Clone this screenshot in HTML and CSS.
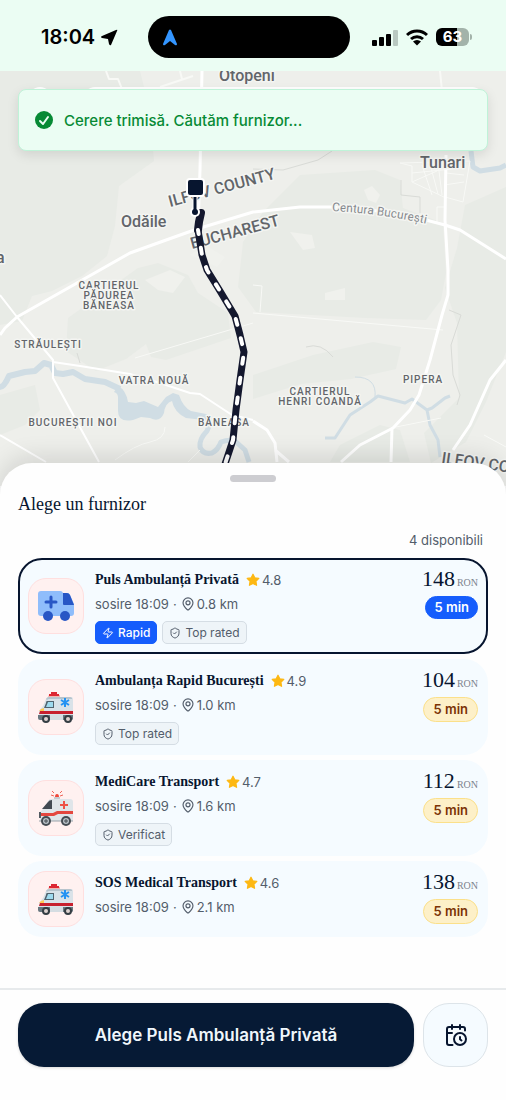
FILE: index.html
```html
<!DOCTYPE html>
<html lang="ro">

<head>
    <meta charset="UTF-8" />
    <meta name="viewport" content="width=device-width, initial-scale=1.0" />
    <link rel="stylesheet" href="styles.css">
    <title>Alege un furnizor</title>
</head>

<body>
    <!-- shared icons -->
    <svg class="sprite" aria-hidden="true">
        <symbol id="star" viewBox="0 0 24 24">
            <path d="M12 2l3.1 6.3 6.9 1-5 4.9 1.2 6.9L12 17.8l-6.2 3.3L7 14.2 2 9.3l6.9-1z" fill="#fdb813" stroke="#fdb813" stroke-width="2" stroke-linejoin="round" />
        </symbol>
        <symbol id="place" viewBox="0 0 24 24">
            <g fill="none" stroke="currentColor" stroke-width="2">
                <path d="M20.500 10c0 5-5.500 10.200-7.400 11.800a1.800 1.800 0 0 1-2.200 0C9 20.200 3.500 15 3.500 10a8.500 8.500 0 0 1 17 0z" />
                <circle cx="12" cy="10" r="3.500" />
            </g>
        </symbol>
        <symbol id="shield" viewBox="0 0 24 24">
            <path d="M20 13c0 5-3.500 7.500-7.700 9a1 1 0 0 1-.6 0C7.500 20.500 4 18 4 13V6a1 1 0 0 1 1-1c2 0 4.500-1.200 6.200-2.700a1.200 1.200 0 0 1 1.600 0C14.500 3.800 17 5 19 5a1 1 0 0 1 1 1zM9 12l2 2 4-4" fill="none" stroke="currentColor" stroke-width="2" stroke-linecap="round" stroke-linejoin="round" />
        </symbol>
        <symbol id="bolt" viewBox="0 0 24 24">
            <path d="M4 14a1 1 0 0 1-.8-1.600l9.900-10.200a.5.5 0 0 1 .9.500L12 8.700A1 1 0 0 0 13 10h7a1 1 0 0 1 .8 1.600l-9.900 10.200a.5.5 0 0 1-.9-.5L12 15.300A1 1 0 0 0 11 14z" fill="none" stroke="currentColor" stroke-width="2" stroke-linejoin="round" />
        </symbol>
        <symbol id="van-blue" viewBox="0 0 36 36">
            <path d="M3 3h19a3 3 0 0 1 3 3v22H3a3 3 0 0 1-3-3V6a3 3 0 0 1 3-3z" fill="#8fbdfb" />
            <path d="M24 5h5q2 0 3 2l4 9v9q0 3-3 3h-9z" fill="#8fbdfb" />
            <path d="M25 5h4q2 0 3 2l4 10H26q-1 0-1-1z" fill="#2856c5" />
            <path d="M13 9v10M8 14h10" stroke="#2856c5" stroke-width="3" stroke-linecap="round" />
            <circle cx="10" cy="28" r="5" fill="#2856c5" />
            <circle cx="27" cy="28" r="5" fill="#2856c5" />
        </symbol>
        <symbol id="van-red" viewBox="0 0 36 36">
            <path d="M10 8q0-2 2-2h10v3H10z" fill="#f3b5b0" />
            <path d="M13 3h6v3h-6zM11 5h10v2H11z" fill="#dc2732" />
            <path d="M10 8h23q2 0 2 2v20H1v-8l4-5 3-7q1-2 2-2z" fill="#d9e2e8" />
            <path d="M9 11q1-1 2-1h23v-1q-1-1-2-1H11q-2 0-3 2z" fill="#b7c4cd" />
            <path d="M9 12h7v7H6l2-5q0-2 1-2z" fill="#51636e" />
            <path d="M10 13h5v5H8z" fill="#9edaee" />
            <path d="M3 20l3-1v3H1z" fill="#ffca55" />
            <path d="M2 22h33v3H1z" fill="#c7202e" />
            <path d="M0 26h35v4q0 1-2 1H2q-2 0-2-2z" fill="#68777f" />
            <path d="M12 26h13v5H12z" fill="#d5dde2" />
            <path d="M27 9v9M23 11l8 5M31 11l-8 5" stroke="#2492f2" stroke-width="2" />
            <circle cx="8" cy="30" r="4" fill="#343d43" />
            <circle cx="30" cy="30" r="4" fill="#343d43" />
            <circle cx="8" cy="30" r="2" fill="#ddd2cf" />
            <circle cx="30" cy="30" r="2" fill="#ddd2cf" />
        </symbol>
        <symbol id="van-siren" viewBox="0 0 36 36">
            <path d="M17 7q0-3 2-3t2 3z" fill="#ef493b" />
            <path d="M13 5l3 1M14 1l2 2M25 5l-3 1M24 1l-2 2" stroke="#ef6358" stroke-width="1" />
            <path d="M16 7h6v3h-6z" fill="#c8ccd0" />
            <path d="M13 9h19q3 0 3 3v19H2v-9l3-3 5-8q1-2 3-2z" fill="#dfe5e9" />
            <path d="M14 10v9H4l6-7q1-2 4-2z" fill="#424a52" />
            <path d="M2 23h13l4-2h16v3H20l-4 2H2z" fill="#e4473f" />
            <path d="M26 11v8M22 15h8" stroke="#ed5147" stroke-width="2" />
            <path d="M2 22v6" stroke="#535b62" stroke-width="2" />
            <path d="M1 31h34" stroke="#9aa3a9" stroke-width="1" />
            <circle cx="8" cy="31" r="5" fill="#444c52" />
            <circle cx="28" cy="31" r="5" fill="#444c52" />
            <circle cx="8" cy="31" r="3" fill="#b9c2c8" />
            <circle cx="28" cy="31" r="3" fill="#b9c2c8" />
            <path d="M6 31h4M8 29v4M26 31h4M28 29v4" stroke="#444c52" stroke-width="1" />
        </symbol>
    </svg>

    <header class="status-bar">
        <div class="clock">
            <span>18:04</span>
            <svg width="17" height="17" viewBox="0 0 17 17"><path d="M15 1q2-1 1 1l-6 14q-1 1-2-1l-1-5-6-1q-2-1 0-2z" fill="#000" /></svg>
        </div>
        <div class="island">
            <svg width="16" height="17" viewBox="0 0 16 17"><path d="M7 1q1-1 2 0l6 14q0 2-2 1l-5-4-5 4q-2 1-2-1z" fill="#3395ff" /></svg>
        </div>
        <div class="signals">
            <svg width="26" height="17" viewBox="0 0 26 17">
                <rect x="0" y="11" width="5" height="6" rx="1" />
                <rect x="7" y="8" width="5" height="9" rx="1" />
                <rect x="14" y="5" width="5" height="12" rx="1" />
                <rect x="21" y="1" width="5" height="16" rx="1" fill="#b9c9c1" />
            </svg>
            <svg width="22" height="17" viewBox="0 0 22 17">
                <path d="M1 6a14.500 14.500 0 0 1 20 0M5 10a9 9 0 0 1 12 0" fill="none" stroke="#000" stroke-width="3" />
                <path d="M7 12.500a6 6 0 0 1 8 0L11 16.500z" />
            </svg>
            <div class="battery"><span>63</span></div>
        </div>
    </header>

    <section class="map">
        <svg class="map-canvas" viewBox="0 71 506 415" role="img" aria-label="Hartă">
            <rect y="71" width="506" height="415" fill="#eeefeb" />
            <!-- fields and woods -->
            <g fill="#e8ebe6">
                <path d="M0 71h140l10 40 4 50-35 25-4 40-8 30-25 20-30 15-20 5-10 25L0 325z" />
                <path d="M68 318l70-50 20-5 30 12 10 18 30 20 3 25-65 22-15-3-5-13-20 15-30 12-30-20z" />
                <path d="M300 175l75-5 25 10 3 28 40 15 3 50-5 27-15 20-60-2-110-6-18-25 5-45 20-30z" />
                <path d="M465 205l41-18v165l-20 50-20 40-35 21-7-30 35-35-2-75-12-35 12-40z" />
                <path d="M253 375l60-20 60-13 28 5-5 22-45 10-50 5-48 15z" />
                <path d="M340 445l40-20 20 5 10 32h-80z" />
                <path d="M0 395l35-10 5 25-15 15-25 10z" />
            </g>
            <g fill="#f0f1ed">
                <path d="M290 232l22 3 3 13-12 2zM325 293l20-5v12h-20zM145 280l25-10 15 7-12 16-15-3zM190 255l15-10 20 12-8 10zM364 190l8-4 8 9-4 8-8-3z" />
            </g>
            <!-- water -->
            <path d="M118 386q8 4 10 16l8 1 8-2 14 6 8-10 7-4 6 2q4 12 12 16l15 3-2 6-18-2q-12-6-14-17-7 2-8 12-4 10-14 5l-9-1-8 3q-15 3-15-9v-10q1-8-4-9z" fill="#d0dde4" />
            <g fill="none" stroke="#d0dde4" stroke-linejoin="round">
                <path d="M0 387q4 0 9-11l16-4 10-1 9-8 7 2 4 8 8 1 10-2 12 7 20 3 15 7" stroke-width="6" />
                <path d="M205 416q7 5 2 15-8 8-7 16 3 8 12 6 6-3 9-11 8-3 14-1l10 9 4 12" stroke-width="5" />
                <path d="M325 438h10l15-23 20-13 8-6 27 7 7-4 15 11 5-2 13-10 5-2M427 410l3 15 8 15 2 17" stroke-width="3" />
                <path d="M375 397q2-20-20-20" stroke-width="1" />
                <path d="M471 151l2 16 7 4 20-3 6-3" stroke-width="5" />
            </g>
            <!-- minor roads -->
            <g fill="none" stroke="#f8f9f6" stroke-width="2" stroke-linejoin="round">
                <path d="M106 71l3 8h9l4 10M180 71l2 8M160 87l33-11M440 71l3 30" />
                <path d="M400 163l12 3v16l34 16M400 163l70-2-7 41-18-5M412 173l50-5M412 182l25-11M422 165l10 30M430 164l8 30M438 163l4 32M446 173l18 2M444 185l20-3" stroke-width="1" />
                <path d="M445 207h-8v17M253 285l9 1-2 26M253 313l190 17M135 358l118-35" stroke-width="1" />
                <path d="M391 428l50-10M484 435l22 12M115 460q20-15 35-18t15-15M200 450l-12 12" stroke-width="1" />
            </g>
            <g fill="none" stroke="#d9dbd7" stroke-width="1">
                <path d="M253 169l30 1 35-10 14-9M401 180v15l19 2v16M306 347q15-5 27 10M449 310l12 5-10 30 2 30 7 20-3 10M77 353l3 10" />
            </g>
            <!-- main roads -->
            <g fill="none" stroke="#fff" stroke-width="3" stroke-linejoin="round">
                <path d="M0 335l5-7 12-11 113-64 25-9 42-15 56-17 47-5h30l60 5 32 7 23 6 15 5 46 29" />
                <path d="M202 71l-2 99-2 58" />
                <path d="M0 295l17 22 36 43v18l46 84M53 362l27 4 50 8 30 9 30 10 10 1 32 21 21 5M0 435l46 27" stroke-width="2" />
                <path d="M446 155l-1 65 3 50v25l-6 20-12 45-11 35-9 15-17 18-33 17-19 17M392 428l-1 34M506 360l-16 20-20 45-17 25" />
                <path d="M253 421l14 9 8 13 2 19M275 450l14 12" />
            </g>

            <g class="map-label town">
                <text x="219" y="81">Otopeni</text>
                <text x="121" y="227">Odăile</text>
                <text x="420" y="168">Tunari</text>
                <text x="-4" y="263">a</text>
                <text transform="translate(170 207) rotate(-15)">ILFOV COUNTY</text>
                <text transform="translate(192 249) rotate(-15)">BUCHAREST</text>
                <text transform="translate(441 463) rotate(8)">ILFOV COUNTY</text>
            </g>
            <g class="map-label district">
                <text x="109" y="289">CARTIERUL</text>
                <text x="109" y="299">PĂDUREA</text>
                <text x="109" y="309">BĂNEASA</text>
                <text x="48" y="348">STRĂULEȘTI</text>
                <text x="154" y="384">VATRA NOUĂ</text>
                <text x="73" y="426">BUCUREȘTII NOI</text>
                <text x="224" y="426">BĂNEASA</text>
                <text x="320" y="395">CARTIERUL</text>
                <text x="320" y="405">HENRI COANDĂ</text>
                <text x="423" y="383">PIPERA</text>
            </g>
            <path id="ring-road" d="M332 211q45 2 100 14" fill="none" />
            <text class="map-label road"><textPath href="#ring-road">Centura București</textPath></text>

            <!-- route -->
            <path d="M201 213l-2 9-1 8" fill="none" stroke="#14182e" stroke-width="8" stroke-linecap="round" />
            <path d="M198 230l4 25 5 15 13 21 15 25 5 19 4 17-4 28-4 30-3 30-10 30" fill="none" stroke="#14182e" stroke-width="7" stroke-linejoin="round" />
            <path d="M198 230l4 25 5 15 13 21 15 25 5 19 4 17-4 28-4 30-3 30-10 30" fill="none" stroke="#fff" stroke-width="4" stroke-linecap="round" stroke-dasharray="6 14" stroke-dashoffset="-18" />
            <path d="M195 195v16" stroke="#fff" stroke-width="5" />
            <circle cx="195" cy="212" r="5" fill="#fff" />
            <circle cx="195" cy="212" r="3" fill="#07152f" />
            <path d="M195 195v16" stroke="#07152f" stroke-width="3" />
            <rect x="187" y="179" width="17" height="17" rx="3" fill="#07152f" stroke="#fff" stroke-width="2" />
        </svg>
        <div class="map-overlay">
            <div class="search-row"><span class="search-back"></span><span class="search-field"></span></div>
            <div class="toast" role="status">
                <svg width="20" height="20" viewBox="0 0 20 20">
                    <circle cx="10" cy="10" r="9" fill="#078a35" />
                    <path d="M6 11l3 3 5-7" fill="none" stroke="#ebfdf3" stroke-width="2" stroke-linecap="round" stroke-linejoin="round" />
                </svg>
                <span>Cerere trimisă. Căutăm furnizor...</span>
            </div>
        </div>
    </section>

    <main class="sheet">
        <div class="handle"></div>
        <h1>Alege un furnizor</h1>
        <p class="count">4 disponibili</p>

        <ul class="providers">
            <li>
                <input type="radio" name="provider" id="puls" class="pick" checked>
                <label class="provider" for="puls">
                    <span class="thumb"><svg><use href="#van-blue" /></svg></span>
                    <span class="info">
                        <span class="name-row"><span class="name">Puls Ambulanță Privată</span><span class="rating"><svg><use href="#star" /></svg>4.8</span></span>
                        <span class="meta">sosire 18:09 <span class="dot">·</span> <svg><use href="#place" /></svg>0.8 km</span>
                        <span class="chips">
                            <span class="chip fast"><svg><use href="#bolt" /></svg>Rapid</span>
                            <span class="chip"><svg><use href="#shield" /></svg>Top rated</span>
                        </span>
                    </span>
                    <span class="cost"><span class="price">148<small>RON</small></span><span class="eta">5 min</span></span>
                </label>
            </li>
            <li>
                <input type="radio" name="provider" id="rapid" class="pick">
                <label class="provider" for="rapid">
                    <span class="thumb"><svg><use href="#van-red" /></svg></span>
                    <span class="info">
                        <span class="name-row"><span class="name">Ambulanța Rapid București</span><span class="rating"><svg><use href="#star" /></svg>4.9</span></span>
                        <span class="meta">sosire 18:09 <span class="dot">·</span> <svg><use href="#place" /></svg>1.0 km</span>
                        <span class="chips"><span class="chip"><svg><use href="#shield" /></svg>Top rated</span></span>
                    </span>
                    <span class="cost"><span class="price">104<small>RON</small></span><span class="eta">5 min</span></span>
                </label>
            </li>
            <li>
                <input type="radio" name="provider" id="medicare" class="pick">
                <label class="provider" for="medicare">
                    <span class="thumb"><svg><use href="#van-siren" /></svg></span>
                    <span class="info">
                        <span class="name-row"><span class="name">MediCare Transport</span><span class="rating"><svg><use href="#star" /></svg>4.7</span></span>
                        <span class="meta">sosire 18:09 <span class="dot">·</span> <svg><use href="#place" /></svg>1.6 km</span>
                        <span class="chips"><span class="chip"><svg><use href="#shield" /></svg>Verificat</span></span>
                    </span>
                    <span class="cost"><span class="price">112<small>RON</small></span><span class="eta">5 min</span></span>
                </label>
            </li>
            <li>
                <input type="radio" name="provider" id="sos" class="pick">
                <label class="provider" for="sos">
                    <span class="thumb"><svg><use href="#van-red" /></svg></span>
                    <span class="info">
                        <span class="name-row"><span class="name">SOS Medical Transport</span><span class="rating"><svg><use href="#star" /></svg>4.6</span></span>
                        <span class="meta">sosire 18:09 <span class="dot">·</span> <svg><use href="#place" /></svg>2.1 km</span>
                    </span>
                    <span class="cost"><span class="price">138<small>RON</small></span><span class="eta">5 min</span></span>
                </label>
            </li>
        </ul>
    </main>

    <footer class="actions">
        <button type="button" class="confirm">Alege Puls Ambulanță Privată</button>
        <button type="button" class="schedule" aria-label="Programează">
            <svg width="24" height="24" viewBox="0 0 24 24" fill="none" stroke="currentColor" stroke-width="2" stroke-linecap="round" stroke-linejoin="round">
                <path d="M21 7.500V6a2 2 0 0 0-2-2H5a2 2 0 0 0-2 2v14a2 2 0 0 0 2 2h3.500M16 2v4M8 2v4M3 10h5M17.500 17.500L16 16.300V14" />
                <circle cx="16" cy="16" r="6" />
            </svg>
        </button>
    </footer>
</body>

</html>
```
FILE: styles.css
```css
:root {
    --navy: #07152f;
    --blue: #155dfc;
    --muted: #535d6b;
    --mint: #ebfdf3;
    --card: #f5fbff;
    --line: #dde4e9;
}

* {
    box-sizing: border-box;
}

body {
    margin: 0;
    min-height: 100vh;
    display: flex;
    flex-direction: column;
    background: #fefefe;
    color: var(--navy);
    font-family: Inter, "Liberation Sans", sans-serif;
    font-size: 13px;
}

.sprite {
    position: absolute;
    width: 0;
    height: 0;
}

/* status bar */
.status-bar {
    display: grid;
    grid-template-columns: 1fr auto 1fr;
    align-items: center;
    padding: 16px 37px 13px 29px;
    background: var(--mint);
    color: #000;
}

.clock {
    display: flex;
    align-items: center;
    gap: 6px;
    padding-left: 12px;
    font-size: 20px;
    font-weight: 600;
}

.island {
    display: flex;
    align-items: center;
    width: 202px;
    height: 42px;
    padding-left: 14px;
    border-radius: 21px;
    background: #000;
}

.signals {
    display: flex;
    align-items: center;
    justify-content: flex-end;
    gap: 8px;
}

.battery {
    position: relative;
    width: 33px;
    height: 18px;
    border-radius: 6px;
    background: linear-gradient(90deg, #000 63%, #a3b3aa 63%);
    color: #fff;
    font-size: 15px;
    font-weight: 700;
    line-height: 18px;
    text-align: center;
}

.battery::after {
    content: "";
    position: absolute;
    top: 6px;
    left: 34px;
    width: 2px;
    height: 6px;
    border-radius: 0 2px 2px 0;
    background: #a3b3aa;
}

/* map */
.map {
    position: relative;
}

.map-canvas {
    display: block;
    width: 100%;
    height: auto;
}

.map-label {
    font-family: Roboto, "Liberation Sans", sans-serif;
    fill: #62656a;
    stroke: #f4f5f2;
    stroke-width: 3px;
    stroke-linejoin: round;
    paint-order: stroke;
}

.town {
    font-size: 16px;
    font-weight: 500;
}

.district {
    font-size: 10px;
    font-weight: 500;
    letter-spacing: 1px;
    text-anchor: middle;
}

.road {
    font-size: 12px;
    fill: #85888d;
}

.map-overlay {
    position: absolute;
    top: 16px;
    left: 18px;
    right: 18px;
}

.search-row {
    display: flex;
    justify-content: space-between;
    height: 2px;
    padding: 0 4px 0 10px;
}

.search-back,
.search-field {
    height: 24px;
    border-radius: 12px;
    background: #fff;
}

.search-back {
    width: 24px;
}

.search-field {
    width: 88%;
}

.toast {
    position: relative;
    display: flex;
    align-items: center;
    gap: 10px;
    height: 62px;
    padding: 0 15px;
    border: 1px solid #bff3d8;
    border-radius: 8px;
    background: var(--mint);
    box-shadow: 0 4px 12px rgba(0, 0, 0, 0.1);
    color: #078a35;
    font-size: 15px;
    font-weight: 500;
}

/* provider sheet */
.sheet {
    position: relative;
    flex: 1;
    margin-top: -23px;
    padding: 12px 18px 16px;
    border-radius: 32px 32px 0 0;
    background: #fefefe;
    box-shadow: 0 -6px 24px rgba(0, 0, 0, 0.12);
}

.handle {
    width: 46px;
    height: 7px;
    margin: 0 auto 9px;
    border-radius: 4px;
    background: #cdcdd1;
}

h1 {
    margin: 0 0 13px;
    font-family: "Liberation Serif", serif;
    font-size: 18px;
    font-weight: 400;
    line-height: 26px;
}

.count {
    margin: 0 5px 8px;
    color: var(--muted);
    line-height: 20px;
    text-align: right;
}

.providers {
    display: flex;
    flex-direction: column;
    gap: 5px;
    margin: 0;
    padding: 0;
    list-style: none;
}

.pick {
    position: absolute;
    opacity: 0;
}

.provider {
    display: flex;
    gap: 11px;
    padding: 8px;
    border: 2px solid var(--card);
    border-radius: 24px;
    background: var(--card);
    cursor: pointer;
}

.pick:checked + .provider {
    border-color: var(--navy);
}

.thumb {
    display: flex;
    align-items: center;
    justify-content: center;
    align-self: center;
    width: 56px;
    height: 56px;
    border: 1px solid #ffdfdf;
    border-radius: 18px;
    background: #fff1f0;
}

.thumb svg {
    width: 36px;
    height: 36px;
}

.info {
    flex: 1;
    min-width: 0;
}

.name-row,
.meta,
.chips,
.rating,
.chip {
    display: flex;
    align-items: center;
}

.name-row {
    gap: 7px;
    line-height: 24px;
}

.name {
    font-family: "Liberation Serif", serif;
    font-size: 14px;
    font-weight: 700;
}

.rating {
    gap: 2px;
    color: var(--muted);
}

.rating svg,
.meta svg {
    width: 14px;
    height: 14px;
}

.meta {
    color: var(--muted);
    line-height: 24px;
}

.meta svg {
    margin-right: 2px;
}

.dot {
    margin: 0 4px;
}

.chips {
    gap: 5px;
    padding-top: 5px;
}

.chip {
    gap: 4px;
    height: 23px;
    padding: 0 6px;
    border: 1px solid #d5dde4;
    border-radius: 5px;
    background: #eef4f8;
    color: var(--muted);
    font-size: 12px;
}

.chip svg {
    width: 12px;
    height: 12px;
}

.fast {
    border-color: var(--blue);
    background: var(--blue);
    color: #fff;
    font-weight: 500;
}

.cost {
    display: flex;
    flex-direction: column;
    align-items: flex-end;
}

.price {
    display: flex;
    align-items: baseline;
    gap: 2px;
    height: 28px;
    font-family: "Liberation Serif", serif;
    font-size: 22px;
    line-height: 22px;
}

.price small {
    color: #7b828d;
    font-size: 10px;
}

.eta {
    height: 25px;
    padding: 0 9px;
    border: 1px solid #fbe08a;
    border-radius: 13px;
    background: #fdf0c8;
    color: #7b3306;
    font-weight: 600;
    line-height: 23px;
}

.pick:checked + .provider .eta {
    height: 23px;
    padding: 0 8px;
    border-color: var(--blue);
    background: var(--blue);
    color: #fff;
    line-height: 21px;
}

/* bottom actions */
.actions {
    position: relative;
    display: flex;
    gap: 9px;
    padding: 13px 18px 33px;
    border-top: 2px solid #e7eaec;
    background: #fefefe;
}

.actions button {
    height: 64px;
    border-radius: 26px;
    font-family: inherit;
    cursor: pointer;
}

.confirm {
    flex: 1;
    border: 0;
    background: #061a35;
    color: #f0f7fc;
    font-size: 17px;
    font-weight: 600;
    box-shadow: 0 1px 3px rgba(0, 0, 0, 0.15);
}

.schedule {
    display: flex;
    align-items: center;
    justify-content: center;
    width: 65px;
    border: 1px solid var(--line);
    background: var(--card);
    color: var(--navy);
}
```
